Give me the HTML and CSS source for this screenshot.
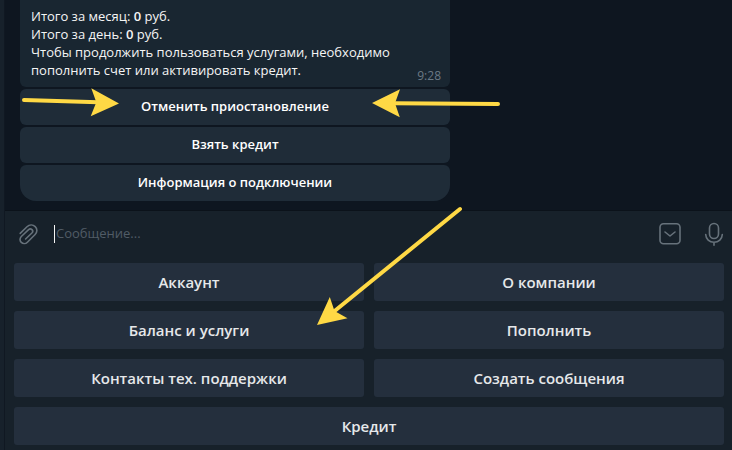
FILE: index.html
```html
<!DOCTYPE html>
<html lang="ru">
<head>
  <meta charset="UTF-8">
  <meta name="viewport" content="width=device-width, initial-scale=1.0">
  <title>Чат</title>
  <link rel="stylesheet" href="styles.css">
</head>
<body>
  <main class="chat">
    <section class="history">
      <div class="message">
        <div class="bubble">
          <p class="text">
            Итого за месяц: <b>0</b> руб.<br>
            Итого за день: <b>0</b> руб.<br>
            Чтобы продолжить пользоваться услугами, необходимо пополнить счет или активировать кредит.
          </p>
          <time class="time">9:28</time>
        </div>
        <button class="inline-btn">Отменить приостановление</button>
        <button class="inline-btn">Взять кредит</button>
        <button class="inline-btn">Информация о подключении</button>
      </div>
    </section>

    <form class="compose">
      <button type="button" class="icon-btn" aria-label="Прикрепить файл">
        <svg width="24" height="24" viewBox="0 0 24 24">
          <path d="M4.2 11.4L11 4.8C13.4 2.5 16.9 2.4 19.2 4.6C21.5 6.8 21.4 10.2 19.1 12.5L11.4 20.2C9.7 21.9 7 22 5.3 20.4C3.6 18.8 3.6 16.2 5.3 14.5L12.6 7.6C13.6 6.7 15 6.7 16 7.6C17 8.6 16.9 10 15.9 11L9.6 17"/>
        </svg>
      </button>
      <input class="field" type="text" placeholder="Сообщение..." aria-label="Сообщение">
      <button type="button" class="icon-btn" aria-label="Скрыть клавиатуру">
        <svg width="24" height="24" viewBox="0 0 24 24">
          <rect x="2" y="1.8" width="20" height="20" rx="3.5"/>
          <path d="M7 10L12 14L17 10"/>
        </svg>
      </button>
      <button type="button" class="icon-btn mic" aria-label="Голосовое сообщение">
        <svg width="24" height="24" viewBox="0 0 24 24">
          <rect x="7.5" y="1.5" width="9" height="15" rx="4.5"/>
          <path d="M3.7 12.5C3.9 17.2 7.4 20.3 12 20.3S20.1 17.2 20.3 12.5M12 20.3V23.2"/>
        </svg>
      </button>
    </form>

    <section class="keyboard">
      <button class="key">Аккаунт</button>
      <button class="key">О компании</button>
      <button class="key">Баланс и услуги</button>
      <button class="key">Пополнить</button>
      <button class="key">Контакты тех. поддержки</button>
      <button class="key">Создать сообщения</button>
      <button class="key wide">Кредит</button>
    </section>
  </main>

  <!-- pointer arrows over the chat -->
  <svg class="arrows" width="732" height="450" viewBox="0 0 732 450" aria-hidden="true">
    <path class="line" d="M24 100L98 102.3"/>
    <path class="head" d="M119 103.4L91.3 88.2L96.3 102.3L90.7 116.2Z"/>
    <path class="line" d="M498 104L394 103.3"/>
    <path class="head" d="M372 103L400 89.3L395 103.3L399.8 117.2Z"/>
    <path class="line" d="M460 209L334 311.5"/>
    <path class="head" d="M317 325L329.8 297L334.5 311L347.5 318.2Z"/>
  </svg>
</body>
</html>
```
FILE: styles.css
```css
* {
  box-sizing: border-box;
}
body {
  margin: 0;
  min-height: 100vh;
  position: relative;
  font-family: 'Open Sans', 'Noto Sans', sans-serif;
  font-size: 13px;
  line-height: 18px;
  background: #17212b;
  color: #f5f5f5;
}
button {
  font-family: inherit;
  border: none;
  padding: 0;
  cursor: pointer;
}
.chat {
  min-height: 100vh;
  margin-left: 4px;
  display: flex;
  flex-direction: column;
  border-left: 1px solid #101822;
  background: #17212a;
}
.history {
  padding: 0 15px 9px;
  background: #0e1620;
}
.message {
  max-width: 430px;
  display: flex;
  flex-direction: column;
  gap: 2px;
}
.bubble {
  display: flex;
  align-items: flex-end;
  justify-content: space-between;
  padding: 7px 9px 8px 11px;
  background: #192631;
  border-radius: 0 0 6px 6px;
}
.text {
  margin: 0;
  flex: 1;
}
b {
  font-weight: 600;
}
.time {
  color: #6b7985;
  font-size: 12px;
  line-height: 14px;
  margin-bottom: -4px;
}
.inline-btn {
  height: 36px;
  padding-bottom: 2px;
  border-radius: 6px;
  background: #1f2c38;
  color: #fff;
  font-size: 13px;
  font-weight: 600;
}
.inline-btn:last-child {
  border-radius: 6px 6px 16px 16px;
}
.compose {
  display: flex;
  align-items: center;
  height: 47px;
  padding: 0 6px 0 11px;
  border-top: 1px solid #0b121a;
}
.icon-btn {
  width: 24px;
  height: 24px;
  background: none;
}
.icon-btn svg {
  display: block;
  fill: none;
  stroke: #67727b;
  stroke-width: 1.6;
  stroke-linecap: round;
  stroke-linejoin: round;
}
.mic {
  margin-left: 20px;
}
.field {
  flex: 1;
  min-width: 0;
  height: 18px;
  margin: 0 14px;
  padding: 0 0 2px 1px;
  border: none;
  border-left: 1px solid #f5f5f5;
  outline: none;
  background: none;
  color: #f5f5f5;
  font-family: inherit;
  font-size: 13px;
}
.field::placeholder {
  color: #515c66;
  opacity: 1;
}
.keyboard {
  display: grid;
  grid-template-columns: 1fr 1fr;
  gap: 10px;
  padding: 6px 8px 5px 9px;
}
.key {
  height: 38px;
  border-radius: 3px;
  background: #242f3d;
  color: #e6e8ea;
  font-size: 15px;
  font-weight: 600;
}
.wide {
  grid-column: 1 / -1;
}
.arrows {
  position: absolute;
  top: 0;
  left: 0;
  pointer-events: none;
}
.line {
  fill: none;
  stroke: #ffd945;
  stroke-width: 4;
  stroke-linecap: round;
}
.head {
  fill: #ffd945;
}
```
